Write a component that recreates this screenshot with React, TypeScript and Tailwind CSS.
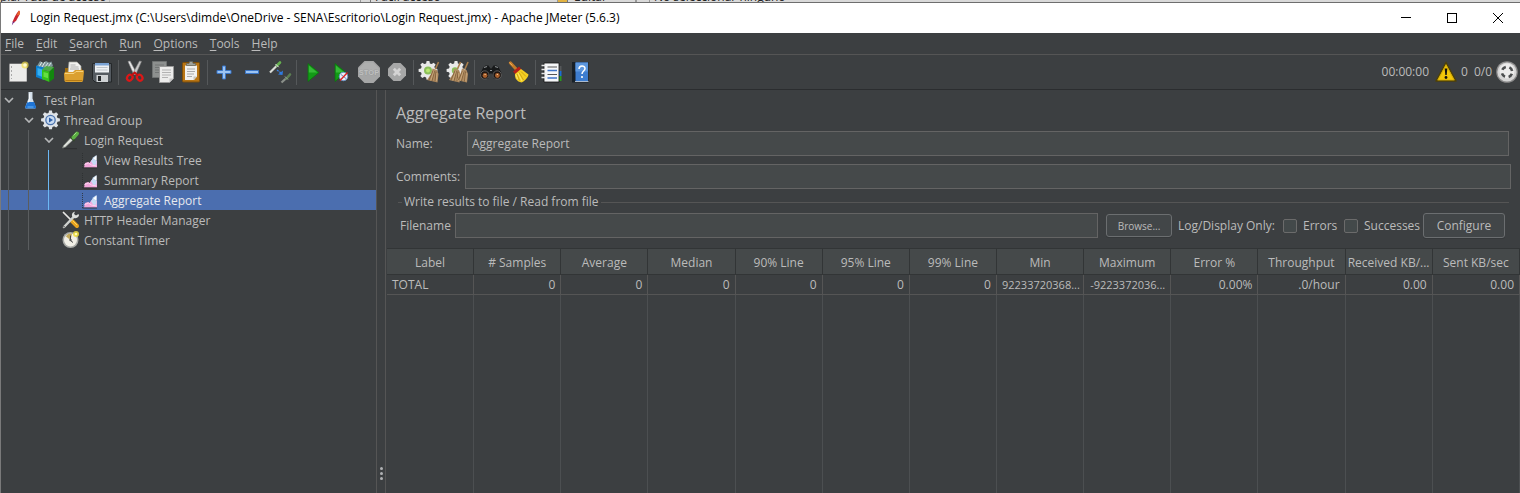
import React, { useState } from "react";

/* ---------- toolbar icons (28 x 28 grid) ---------- */

function ToolSvg({ children }: { children: React.ReactNode }) {
  return (
    <svg viewBox="0 0 28 28" className="size-7" aria-hidden="true">
      {children}
    </svg>
  );
}

const gearPath =
  "M10.6 3h2.8l.5 2.4 1.7.7 2.1-1.4 2 2-1.4 2.1.7 1.7 2.4.5v2.8l-2.4.5-.7 1.7 1.4 2.1-2 2-2.1-1.4-1.7.7-.5 2.4h-2.8l-.5-2.4-1.7-.7-2.1 1.4-2-2 1.4-2.1-.7-1.7L2.6 13.8V11l2.4-.5.7-1.7L4.3 6.700l2-2 2.1 1.4 1.7-.7z";

const NewIcon = () => (
  <ToolSvg>
    <rect x="5" y="5.5" width="18" height="18.5" rx="1" fill="#9b9b9b" />
    <rect x="6" y="6" width="16.5" height="17" fill="#ececea" />
    <path d="M7.5 8v2M7.5 12v2M7.5 16v2M7.5 20v1" stroke="#a9a9a9" />
    <circle cx="21" cy="7" r="3.6" fill="#f4e04d" opacity=".7" />
    <circle cx="21" cy="7" r="1.8" fill="#fffbd0" />
  </ToolSvg>
);

const TemplatesIcon = () => (
  <ToolSvg>
    <path d="M5 8l3-5 3 2 3-2 3 1.5 2.500-1L21 8l-5 4H9z" fill="#7f9699" />
    <path d="M7 9l3-5M10 9l3-5M13 9l3-4M16 9l3-4" stroke="#e8f0f0" strokeWidth=".9" />
    <path d="M4 7.5l8 2V22l-8-3z" fill="#0d7fcf" />
    <path d="M5.5 10l5 1.5v7.5l-5-2z" fill="#35b0f2" />
    <path d="M10 11.5l7.5 2v10.5l-7.5-3z" fill="#35c21b" />
    <path d="M17.5 13.5L22 9v11.5L17.5 24z" fill="#12860d" />
    <path d="M10 11.5l4-3.5 8 1-4.5 4.5z" fill="#4ea948" />
    <path d="M11.5 14l4.5 1.3v5l-4.5-1.5z" fill="#7aea52" opacity=".7" />
  </ToolSvg>
);

const OpenIcon = () => (
  <ToolSvg>
    <path d="M5 10h3l1-1h11l2 2v4H5z" fill="#9c6a0c" />
    <path d="M9 4h8l4 4v8H8z" fill="#f1f1ef" stroke="#a7a7a2" strokeWidth=".7" />
    <path d="M10.5 7h5M10.5 9h8M10 11h9" stroke="#a8a8a8" strokeWidth=".9" />
    <path d="M4 15.5l1-1.5h8l2-2h8.5l.5 1.5-1 9.500-1 1H5.500l-1-1z" fill="#dba02f" />
    <path d="M5 15.5h9l2-2h7" stroke="#f7d27c" fill="none" />
    <path d="M5.5 22.5h17" stroke="#b67a14" />
  </ToolSvg>
);

const SaveIcon = () => (
  <ToolSvg>
    <path d="M4.5 5.5h19v18.5H7l-2.500-2.500z" fill="#555b61" stroke="#25282a" />
    <rect x="7" y="5" width="14" height="9.5" fill="#eef1f4" />
    <rect x="7" y="5" width="14" height="2.5" fill="#7aa4d6" />
    <path d="M8.5 9.5h11M8.5 12h11" stroke="#bfc5ca" />
    <rect x="8.5" y="17" width="11.5" height="7" fill="#cfd2d4" />
    <rect x="10" y="18" width="3" height="5" fill="#26292b" />
  </ToolSvg>
);

const CutIcon = () => (
  <ToolSvg>
    <path d="M7 3.5l2-.5 6.500 12-2.500 2z" fill="#e7e7e7" stroke="#8a8a8a" strokeWidth=".6" />
    <path d="M20.5 3.5l-2-.5-6.500 12 2.500 2z" fill="#c9c9c9" stroke="#808080" strokeWidth=".6" />
    <ellipse cx="8.800" cy="19.700" rx="2.600" ry="3.100" transform="rotate(35 8.800 19.700)" fill="none" stroke="#dd1717" strokeWidth="2.200" />
    <ellipse cx="18.700" cy="19.700" rx="2.600" ry="3.100" transform="rotate(-35 18.700 19.700)" fill="none" stroke="#dd1717" strokeWidth="2.200" />
    <path d="M10.5 17.5l3.200-3 3.200 3" fill="none" stroke="#c31010" strokeWidth="2" />
  </ToolSvg>
);

const CopyIcon = () => (
  <ToolSvg>
    <path d="M3.5 3.5h14v16h-14z" fill="#8d908f" stroke="#6f7272" />
    <path d="M6 7h9M6 9.500h9M6 12h4M6 14.500h4" stroke="#727575" />
    <path d="M10.5 8.5h14v12l-4 4h-10z" fill="#ececeb" stroke="#9a9a9a" />
    <path d="M13 12h9M13 14.500h9M13 17h9M13 19.500h6" stroke="#b2b2b2" />
    <path d="M20.5 24.5v-4h4z" fill="#c4c4c4" />
  </ToolSvg>
);

const PasteIcon = () => (
  <ToolSvg>
    <rect x="5.500" y="4.500" width="17" height="19.500" rx="1" fill="#b87514" stroke="#7d4e0a" />
    <path d="M8 7.500h12v11l-3 3.500H8z" fill="#f1f1ef" />
    <path d="M10 11h8M10 13.500h8M10 16h7M10 18.500h5" stroke="#aaa" />
    <path d="M9.500 7.500V5.500h2.500l.7-2h2.800l.6 2h2.500v2z" fill="#a0a39c" stroke="#5f625c" strokeWidth=".7" />
    <path d="M16.500 22v-3.500H20z" fill="#c5c5c0" />
  </ToolSvg>
);

const ExpandIcon = () => (
  <ToolSvg>
    <path d="M12.500 8h3v4.500H21v3h-5.500V21h-3v-5.500H7v-3h5.500z" fill="#9cc4f2" stroke="#3b76c6" />
  </ToolSvg>
);

const CollapseIcon = () => (
  <ToolSvg>
    <path d="M7.500 12.500h13v3h-13z" fill="#9cc4f2" stroke="#3b76c6" />
  </ToolSvg>
);

const ToggleIcon = () => (
  <ToolSvg>
    <path d="M4 14.500l7-7" stroke="#d9dcd7" strokeWidth="2.200" />
    <path d="M11 7.500l3-3" stroke="#65b04f" strokeWidth="2.600" strokeLinecap="round" />
    <path d="M9.500 6l3.200 3.200" stroke="#e8ebe6" strokeWidth="1" />
    <path d="M11 12l4 3" stroke="#3c86e8" strokeWidth="1.200" strokeDasharray="2 1" />
    <path d="M17 12.500l-.5 4.500-4.500-.5z" fill="#2f7ae0" />
    <path d="M15.500 24.500l5-4.500" stroke="#8b908a" strokeWidth="2.200" />
    <path d="M20.500 20.500l3.500-4" stroke="#5c7f52" strokeWidth="2.600" strokeLinecap="round" />
    <path d="M19 18.500l3 3" stroke="#9ca39a" />
  </ToolSvg>
);

const StartIcon = () => (
  <ToolSvg>
    <path d="M9 5.500v18L20 14.500z" fill="#129a16" stroke="#0e700f" strokeWidth=".8" />
    <path d="M9.800 7.500v7h8.500z" fill="#43c443" opacity=".75" />
  </ToolSvg>
);

const StartNoPauseIcon = () => (
  <ToolSvg>
    <path d="M8 5.500v18L19 14.500z" fill="#129a16" stroke="#0e700f" strokeWidth=".8" />
    <path d="M8.800 7.500v7h8.500z" fill="#43c443" opacity=".75" />
    <circle cx="16.500" cy="18.500" r="4.200" fill="#e8eef5" stroke="#6e94c4" />
    <path d="M14 16.500l5 4" stroke="#6787bd" />
    <path d="M13 22.500l7.500-8" stroke="#d22" strokeWidth="1.300" />
  </ToolSvg>
);

const StopIcon = () => (
  <ToolSvg>
    <path d="M9.500 3h9L25 9.500v9L18.500 25h-9L3 18.500v-9z" fill="#a5a6a6" />
    <path d="M10 4.500h8l5.500 5.500v4H4.500v-4z" fill="#aeafaf" />
    <text x="14" y="17" textAnchor="middle" fontSize="7.500" fontWeight="700" fill="#bfc0c0" stroke="#949595" strokeWidth=".6" paintOrder="stroke" fontFamily="Liberation Sans, sans-serif">STOP</text>
  </ToolSvg>
);

const ShutdownIcon = () => (
  <ToolSvg>
    <path d="M10.500 5h7L23 10.500v7L17.500 23h-7L5 17.500v-7z" fill="#a6a7a7" />
    <path d="M10.800 10.800l6.400 6.400M17.200 10.800l-6.400 6.400" stroke="#d4d4d4" strokeWidth="2.800" />
  </ToolSvg>
);

const BroomHead = ({ dx = 0 }: { dx?: number }) => (
  <g transform={`translate(${dx} 0)`}>
    <path d="M22.500 4l-3 7" stroke="#a97e4c" strokeWidth="1.600" />
    <path d="M16.500 10.500l4.500 1.500 1.500 4-1 8.500-10.500-2.500 4-6z" fill="#b08c62" />
    <path d="M17 13l-4 9M18.500 13l-2.500 10M20 13.500l-1 10" stroke="#7c5a35" strokeWidth=".8" />
    <path d="M17.800 13l-3 9.500M20.800 15l-.5 8" stroke="#d8b88c" strokeWidth=".6" />
  </g>
);

const ClearIcon = () => (
  <ToolSvg>
    <path d={gearPath} fill="#e9e9e9" />
    <circle cx="12" cy="12.400" r="4" fill="#8bbf5a" />
    <circle cx="12" cy="12.400" r="2" fill="#b8e86f" />
    <BroomHead />
  </ToolSvg>
);

const ClearAllIcon = () => (
  <ToolSvg>
    <path d={gearPath} fill="#e9e9e9" />
    <circle cx="11" cy="12.400" r="3.200" fill="#8bbf5a" />
    <BroomHead dx={-6} />
    <BroomHead dx={1.5} />
  </ToolSvg>
);

const SearchIcon = () => (
  <ToolSvg>
    <path d="M3 16L6.500 9l2-1.500h3l2 3h1l2-3h3l2 1.500L25 16l-3 5h-5L15 15.500h-2L11 21H6z" fill="#17191a" />
    <path d="M7 9.500l3-1M18 8.500l3 1M13 12.500h2" stroke="#8a8f91" strokeWidth="1.200" />
    <circle cx="7.800" cy="17" r="4.200" fill="#1d1512" stroke="#5c5c5c" />
    <circle cx="20.200" cy="17" r="4.200" fill="#1d1512" stroke="#5c5c5c" />
    <circle cx="8" cy="17.500" r="2.400" fill="#a9602d" />
    <circle cx="20.400" cy="17.500" r="2.400" fill="#a9602d" />
    <path d="M7.500 16.500h1.200M19.800 16.500h1.200" stroke="#f2c89a" />
  </ToolSvg>
);

const ResetSearchIcon = () => (
  <ToolSvg>
    <path d="M5.500 5l6 6.500" stroke="#c47c2a" strokeWidth="3.200" strokeLinecap="round" />
    <path d="M4.500 4.500l3 3" stroke="#e9ab58" />
    <path d="M8 13.500l6-5 2.500 3-6 5z" fill="#b51f18" />
    <path d="M10 16l6-5 7.500 5.500c-.5 3-4 7-7 8-4.500-1-7-4-6.500-8.500z" fill="#f3ce23" />
    <path d="M12 16l2.500 6.500M14 14.500l4.500 7.500M16 13.500l5 5" stroke="#c59a0c" strokeWidth=".8" />
    <path d="M11 16.500l1.500 4.500M13 15l4 8" stroke="#fff08c" strokeWidth=".7" />
  </ToolSvg>
);

const FunctionHelperIcon = () => (
  <ToolSvg>
    <path d="M20 8h3.500v5H20z" fill="#55585a" />
    <path d="M20 13h3.500v5H20z" fill="#1c6ed2" />
    <path d="M20 18h3.500v5H20z" fill="#2a9a1f" />
    <path d="M6 5h15v19H6z" fill="#f6f7f9" stroke="#111" strokeWidth=".8" />
    <path d="M9.500 9h9.500M9.500 16.500h9.500" stroke="#555" strokeWidth="1.100" />
    <path d="M9.500 12.500h9.500M9.500 20h9.500" stroke="#3f74c8" strokeWidth="1.300" />
    <path d="M3.500 7.500h4M3.500 11.500h4M3.500 15.500h4M3.500 19.500h4" stroke="#e5e5e5" strokeWidth="1.500" />
  </ToolSvg>
);

const HelpIcon = () => (
  <ToolSvg>
    <path d="M6 4h16.500v20.500H6z" fill="#182028" />
    <path d="M9.500 4.500H22v19H9.500z" fill="#3d7dd0" />
    <path d="M9.500 4.500H22v9H9.500z" fill="#5c97df" />
    <path d="M9 23.500h13.500" stroke="#cfd7e2" strokeWidth=".8" />
    <path d="M13 11c0-4 6-4 6-.5 0 2.500-3 2.500-3 5.500" fill="none" stroke="#fff" strokeWidth="1.500" />
    <circle cx="16" cy="19" r="1.100" fill="#fff" />
  </ToolSvg>
);

/* ---------- tree icons (20 x 20 grid) ---------- */

function TreeSvg({ children }: { children: React.ReactNode }) {
  return (
    <svg viewBox="0 0 20 20" className="size-5 shrink-0" aria-hidden="true">
      {children}
    </svg>
  );
}

const FlaskIcon = () => (
  <TreeSvg>
    <path d="M7.500 2h4v6.500l3.200 8.500c.2.800-.2 1.500-1 1.500H5.300c-.8 0-1.200-.7-1-1.500l3.200-8.500z" fill="#d3dfea" />
    <path d="M6.300 12h6.800l1.900 5c.2.800-.3 1.500-1 1.500H5.200c-.7 0-1.200-.7-1-1.500z" fill="#1f74d4" />
    <path d="M8.700 3.500v6l-1.500 3" stroke="#fff" fill="none" />
    <path d="M6.500 17h6" stroke="#6ab4f4" />
  </TreeSvg>
);

const ThreadGroupIcon = () => (
  <TreeSvg>
    <path transform="translate(-2.500 -2.500)" d={gearPath} fill="#dfe3e7" />
    <circle cx="9.500" cy="10" r="5.300" fill="#4c73ad" />
    <circle cx="9.500" cy="10" r="4" fill="#c8dbf2" />
    <path d="M8 7.500l4 2.500-4 2.500z" fill="#2e5fa6" />
  </TreeSvg>
);

const SamplerIcon = () => (
  <TreeSvg>
    <path d="M1.500 18l1-2.500 7.500-8 2 2.500-7.500 7z" fill="#dfe2dd" stroke="#777c75" strokeWidth=".7" />
    <path d="M9 6.500l4.500 4.500" stroke="#33472c" strokeWidth="1.800" />
    <path d="M12.500 7.500l3.500-4" stroke="#5caf43" strokeWidth="4" strokeLinecap="round" />
    <path d="M12.500 5.500l3-3" stroke="#a1dc8b" strokeWidth="1" />
    <path d="M3 18.700h13" stroke="#292b2c" strokeWidth=".8" />
  </TreeSvg>
);

const ListenerIcon = () => (
  <TreeSvg>
    <path d="M1.500 3v15" stroke="#2b2d2f" strokeWidth=".8" strokeDasharray="1 1" />
    <path d="M3 17.500l1-4.500 3-1 1.500 1 2-3 3-1 2.500 2v6.500z" fill="#f3a6dc" />
    <path d="M10 11.500l2-4 3.500-2.500v9.500l-3 .5z" fill="#c6dcf5" />
    <path d="M12.500 8.500l3-3v5z" fill="#fff" />
    <path d="M3.500 14.500l4-1.500 3 2 5 1" stroke="#fbd9f1" fill="none" />
    <path d="M1.500 18h14.500" stroke="#2b2d2f" strokeWidth=".8" />
  </TreeSvg>
);

const ConfigIcon = () => (
  <TreeSvg>
    <path d="M2.500 2.500l9 9" stroke="#e7e7e4" strokeWidth="1.700" strokeLinecap="round" />
    <path d="M11 11l5 5" stroke="#e9a41f" strokeWidth="4" strokeLinecap="round" />
    <path d="M11.500 10.500l4.500 4.500" stroke="#fbd45d" strokeWidth="1" />
    <path d="M3 17l10-10.500" stroke="#cfd2cf" strokeWidth="2.500" strokeLinecap="round" />
    <path d="M12 2.500c-2 2-1 5 1 5.500s4 0 5-2.500l-.5-1.500-2.500 1.500-2-1.500 1-2.500z" fill="#dcdfdc" />
    <circle cx="3" cy="16.800" r=".8" fill="#555" />
  </TreeSvg>
);

const TimerIcon = () => (
  <TreeSvg>
    <circle cx="9.500" cy="10" r="8" fill="#a8aaa6" />
    <circle cx="9.500" cy="10" r="6.500" fill="#f1efe6" />
    <path d="M9.500 10L5 6.500c1-2.500 4-3.500 6-2.500z" fill="#c2a95e" />
    <path d="M9.500 5.500v5l2.500 2" stroke="#444" fill="none" />
    <circle cx="9.500" cy="10" r="1.200" fill="#555" />
    <circle cx="15" cy="4" r="3" fill="#f2e03d" opacity=".85" />
    <circle cx="15" cy="4" r="1.300" fill="#fffcb8" />
  </TreeSvg>
);

/* ---------- data ---------- */

type Tool = { name: string; icon: () => React.ReactElement };

const toolGroups: Tool[][] = [
  [
    { name: "New", icon: NewIcon },
    { name: "Templates", icon: TemplatesIcon },
    { name: "Open", icon: OpenIcon },
    { name: "Save", icon: SaveIcon },
  ],
  [
    { name: "Cut", icon: CutIcon },
    { name: "Copy", icon: CopyIcon },
    { name: "Paste", icon: PasteIcon },
  ],
  [
    { name: "Expand All", icon: ExpandIcon },
    { name: "Collapse All", icon: CollapseIcon },
    { name: "Toggle", icon: ToggleIcon },
  ],
  [
    { name: "Start", icon: StartIcon },
    { name: "Start no pauses", icon: StartNoPauseIcon },
    { name: "Stop", icon: StopIcon },
    { name: "Shutdown", icon: ShutdownIcon },
  ],
  [
    { name: "Clear", icon: ClearIcon },
    { name: "Clear All", icon: ClearAllIcon },
  ],
  [
    { name: "Search", icon: SearchIcon },
    { name: "Reset Search", icon: ResetSearchIcon },
  ],
  [
    { name: "Function Helper Dialog", icon: FunctionHelperIcon },
    { name: "Help", icon: HelpIcon },
  ],
];

const menus = ["File", "Edit", "Search", "Run", "Options", "Tools", "Help"];

type Node = { label: string; depth: number; open?: boolean; icon: () => React.ReactElement };

const nodes: Node[] = [
  { label: "Test Plan", depth: 0, open: true, icon: FlaskIcon },
  { label: "Thread Group", depth: 1, open: true, icon: ThreadGroupIcon },
  { label: "Login Request", depth: 2, open: true, icon: SamplerIcon },
  { label: "View Results Tree", depth: 3, icon: ListenerIcon },
  { label: "Summary Report", depth: 3, icon: ListenerIcon },
  { label: "Aggregate Report", depth: 3, icon: ListenerIcon },
  { label: "HTTP Header Manager", depth: 2, icon: ConfigIcon },
  { label: "Constant Timer", depth: 2, icon: TimerIcon },
];

const columns = [
  "Label", "# Samples", "Average", "Median", "90% Line", "95% Line", "99% Line",
  "Min", "Maximum", "Error %", "Throughput", "Received KB/...", "Sent KB/sec",
];

const totals = [
  "TOTAL", "0", "0", "0", "0", "0", "0",
  "92233720368...", "-9223372036...", "0.00%", ".0/hour", "0.00", "0.00",
];

/* ---------- parts ---------- */

function BackgroundStrip() {
  return (
    <div className="flex h-[3px] shrink-0 items-end overflow-hidden border-b border-[#6e6e6e] bg-[#d9d9d9] leading-[10px] whitespace-nowrap text-[#222]" aria-hidden="true">
      <span className="w-[110px] border-r border-[#bbb]">plar ruta de acceso</span>
      <span className="w-[251px] border-r border-[#999]">&nbsp;</span>
      <span className="w-[10px] border-r border-[#777]">&nbsp;</span>
      <span className="w-[187px] border-r border-[#999] pl-1">Fácil acceso</span>
      <span className="w-[10px] border-r border-[#777] bg-[#e3b341]">&nbsp;</span>
      <span className="w-[68px] border-r border-[#999] pl-1.5">Editar</span>
      <span className="w-[14px] border-x border-[#999]">&nbsp;</span>
      <span className="pl-1">No seleccionar ninguno</span>
    </div>
  );
}

function TitleBar() {
  return (
    <header className="flex h-[30px] shrink-0 items-center bg-white text-black">
      <svg viewBox="0 0 10 18" className="ml-[10px] h-[18px] w-2.5" aria-hidden="true">
        <path d="M1.500 13C3 9 5 4.500 8 1.500c1 .5 1.200 2.500.3 4.500L5 12l-2.500 1.500z" fill="#c9252d" />
        <path d="M8 1.500c1 .5 1.200 2.500.3 4.500L5.500 6.500z" fill="#e9672b" />
        <path d="M.8 16.500L1.800 12.500l2.200.5-1.500 1z" fill="#6d2380" />
      </svg>
      <h1 className="ml-[9px] flex-1 truncate">
        Login Request.jmx (C:\Users\dimde\OneDrive - SENA\Escritorio\Login Request.jmx) - Apache JMeter (5.6.3)
      </h1>
      <button type="button" aria-label="Minimize" className="flex h-full w-[46px] items-center justify-center">
        <svg viewBox="0 0 10 10" className="size-2.5" shapeRendering="crispEdges"><path d="M0 4.500h10" stroke="#000" /></svg>
      </button>
      <button type="button" aria-label="Maximize" className="flex h-full w-[46px] items-center justify-center">
        <svg viewBox="0 0 10 10" className="size-2.5" shapeRendering="crispEdges"><path d="M.5.5h9v9h-9z" fill="none" stroke="#000" /></svg>
      </button>
      <button type="button" aria-label="Close" className="flex h-full w-[45px] items-center justify-center">
        <svg viewBox="0 0 10 10" className="size-2.5"><path d="M0 0l10 10M10 0L0 10" stroke="#000" /></svg>
      </button>
    </header>
  );
}

function MenuBar() {
  return (
    <nav className="flex h-[22px] shrink-0 items-center gap-3 border-b border-[#555] pl-1">
      {menus.map((m) => (
        <button key={m} type="button">
          <span className="underline underline-offset-2">{m[0]}</span>
          {m.slice(1)}
        </button>
      ))}
    </nav>
  );
}

function Toolbar() {
  return (
    <div role="toolbar" className="flex h-[35px] shrink-0 items-center border-b border-[#2b2d2f] pl-[3px]">
      {toolGroups.map((group, i) => (
        <div key={group[0].name} className="flex items-center">
          {i > 0 && <span className="mx-0.5 h-[25px] w-px bg-[#55585a]" />}
          {group.map(({ name, icon: Icon }) => (
            <button key={name} type="button" aria-label={name}>
              <Icon />
            </button>
          ))}
        </div>
      ))}
      <div className="ml-auto flex items-center pr-0.5">
        <span>00:00:00</span>
        <button type="button" aria-label="Show log" className="ml-[6px]">
          <svg viewBox="0 0 22 22" className="size-[22px]" aria-hidden="true">
            <path d="M11 1.500l10 18.500H1z" fill="#f2c60a" stroke="#4d4008" strokeWidth="1.500" strokeLinejoin="round" />
            <path d="M11 4L19 19H3z" fill="none" stroke="#caa200" strokeWidth=".6" />
            <path d="M9.700 7.500h2.600L11.700 14h-1.400z" fill="#111" />
            <circle cx="11" cy="16.500" r="1.400" fill="#111" />
          </svg>
        </button>
        <span className="ml-1">0</span>
        <span className="ml-[6px]">0/0</span>
        <svg viewBox="0 0 22 22" className="ml-1 size-[22px]" aria-hidden="true">
          <circle cx="11" cy="11" r="10.800" fill="#8d8d8d" />
          <circle cx="11" cy="11" r="9.600" fill="#d6d6d6" />
          <circle cx="11" cy="10" r="7.500" fill="#ececec" />
          <circle cx="11" cy="11" r="5.200" fill="none" stroke="#4c4f50" strokeWidth="2.600" strokeDasharray="4.400 3.768" strokeDashoffset="-1.884" />
        </svg>
      </div>
    </div>
  );
}

function TestTree({ selected, onSelect }: { selected: string; onSelect: (s: string) => void }) {
  return (
    <ul role="tree" aria-label="Test plan" className="w-[376px] shrink-0 border-r border-[#555]">
      {nodes.map(({ label, depth, open, icon: Icon }) => (
        <li
          key={label}
          role="treeitem"
          aria-level={depth + 1}
          aria-expanded={open}
          aria-selected={label === selected}
          onClick={() => onSelect(label)}
          className={`flex h-5 items-center ${label === selected ? "bg-[#4b6eaf] text-[#e6e9ee]" : ""}`}
        >
          {Array.from({ length: depth }, (_, d) => (
            <span key={d} className="flex h-5 w-5 shrink-0 pl-[7px]">
              <span className={`w-px ${d === 2 ? "bg-[#6cb8f5]" : "bg-[#5a5d5f]"}`} />
            </span>
          ))}
          <span className="flex w-5 shrink-0 pl-[3px]">
            {open && (
              <svg viewBox="0 0 10 6" className="h-1.5 w-2.5" aria-hidden="true">
                <path d="M1 1l4 4 4-4" fill="none" stroke="#b4b6b7" strokeWidth="1.700" />
              </svg>
            )}
          </span>
          <Icon />
          <span className="pt-0.5 pl-[3px]">{label}</span>
        </li>
      ))}
    </ul>
  );
}

const field = "h-[25px] min-w-0 flex-1 border border-[#646464] bg-[#45494a] px-1 outline-none";
const pushButton = "rounded-[3px] border border-[#6b6e70] bg-[#424648] shadow-[0_1px_0_#35383a]";
const checkbox = "size-[14px] appearance-none rounded-[2px] border border-[#6b6b6b] bg-[#43494a]";

function ReportForm() {
  const [name, setName] = useState("Aggregate Report");
  return (
    <form className="shrink-0" onSubmit={(e) => e.preventDefault()}>
      <h2 className="pt-[11px] pl-[9px] text-base leading-6">Aggregate Report</h2>
      <div className="mt-[6px] flex items-center pr-[11px] pl-[9px]">
        <label htmlFor="name" className="w-[71px]">Name:</label>
        <input id="name" className={field} value={name} onChange={(e) => setName(e.target.value)} />
      </div>
      <div className="mt-2 flex items-center pr-[9px] pl-[9px]">
        <label htmlFor="comments" className="w-[69px]">Comments:</label>
        <input id="comments" className={field} />
      </div>
      <fieldset className="mr-[11px] ml-[11px] min-w-0 border-t border-[#555]">
        <legend className="ml-1 px-0.5 leading-[26px]">Write results to file / Read from file</legend>
        <div className="-mt-0.5 flex items-center pr-1 pb-[10px] pl-0.5">
          <label htmlFor="filename" className="w-[55px]">Filename</label>
          <input id="filename" className={field} />
          <button type="button" className={`${pushButton} ml-2 h-[23px] w-[66px] text-[10px]`}>Browse...</button>
          <span className="ml-[6px] w-[105px] whitespace-nowrap">Log/Display Only:</span>
          <label className="flex w-[61px] items-center gap-[6px]">
            <input type="checkbox" className={checkbox} />Errors
          </label>
          <label className="flex w-[79px] items-center gap-[6px]">
            <input type="checkbox" className={checkbox} />Successes
          </label>
          <button type="button" className={`${pushButton} h-[25px] w-[82px]`}>Configure</button>
        </div>
      </fieldset>
    </form>
  );
}

function ResultsTable() {
  return (
    <div className="min-h-0 flex-1">
      <table className="h-full w-full table-fixed border-separate border-spacing-0">
        <thead>
          <tr className="h-[27px] bg-[#45494a]">
            {columns.map((c) => (
              <th key={c} scope="col" className="border-y border-r border-[#323536] pt-0.5 font-normal whitespace-nowrap">{c}</th>
            ))}
          </tr>
        </thead>
        <tbody>
          <tr className="h-5">
            {totals.map((t, i) => (
              <td
                key={columns[i]}
                className={`border-r border-b border-[#555] px-[5px] whitespace-nowrap ${i > 0 ? "text-right" : ""} ${t.length > 10 ? "text-[11px]" : ""}`}
              >
                {t}
              </td>
            ))}
          </tr>
          <tr className="h-full" aria-hidden="true">
            {columns.map((c) => (
              <td key={c} className="border-r border-[#4c4f51]" />
            ))}
          </tr>
        </tbody>
      </table>
    </div>
  );
}

export default function App() {
  const [selected, setSelected] = useState("Aggregate Report");
  return (
    <div className="flex h-screen flex-col overflow-hidden bg-[#3c3f41] font-['Open_Sans','Noto_Sans',sans-serif] text-[12px] leading-4 text-[#bbbbbb]">
      <BackgroundStrip />
      <div className="flex min-h-0 flex-1 flex-col border-l border-[#7a7a7a]">
        <TitleBar />
        <MenuBar />
        <Toolbar />
        <main className="flex min-h-0 flex-1">
          <TestTree selected={selected} onSelect={setSelected} />
          <div role="separator" aria-orientation="vertical" className="flex w-[9px] shrink-0 flex-col items-center justify-end gap-0.5 border-r border-[#555] pb-[13px]">
            <span className="size-[3px] rounded-full bg-[#afb1b3]" />
            <span className="size-[3px] rounded-full bg-[#afb1b3]" />
            <span className="size-[3px] rounded-full bg-[#afb1b3]" />
          </div>
          <section className="flex min-w-0 flex-1 flex-col pl-px">
            <ReportForm />
            <ResultsTable />
          </section>
        </main>
      </div>
    </div>
  );
}
